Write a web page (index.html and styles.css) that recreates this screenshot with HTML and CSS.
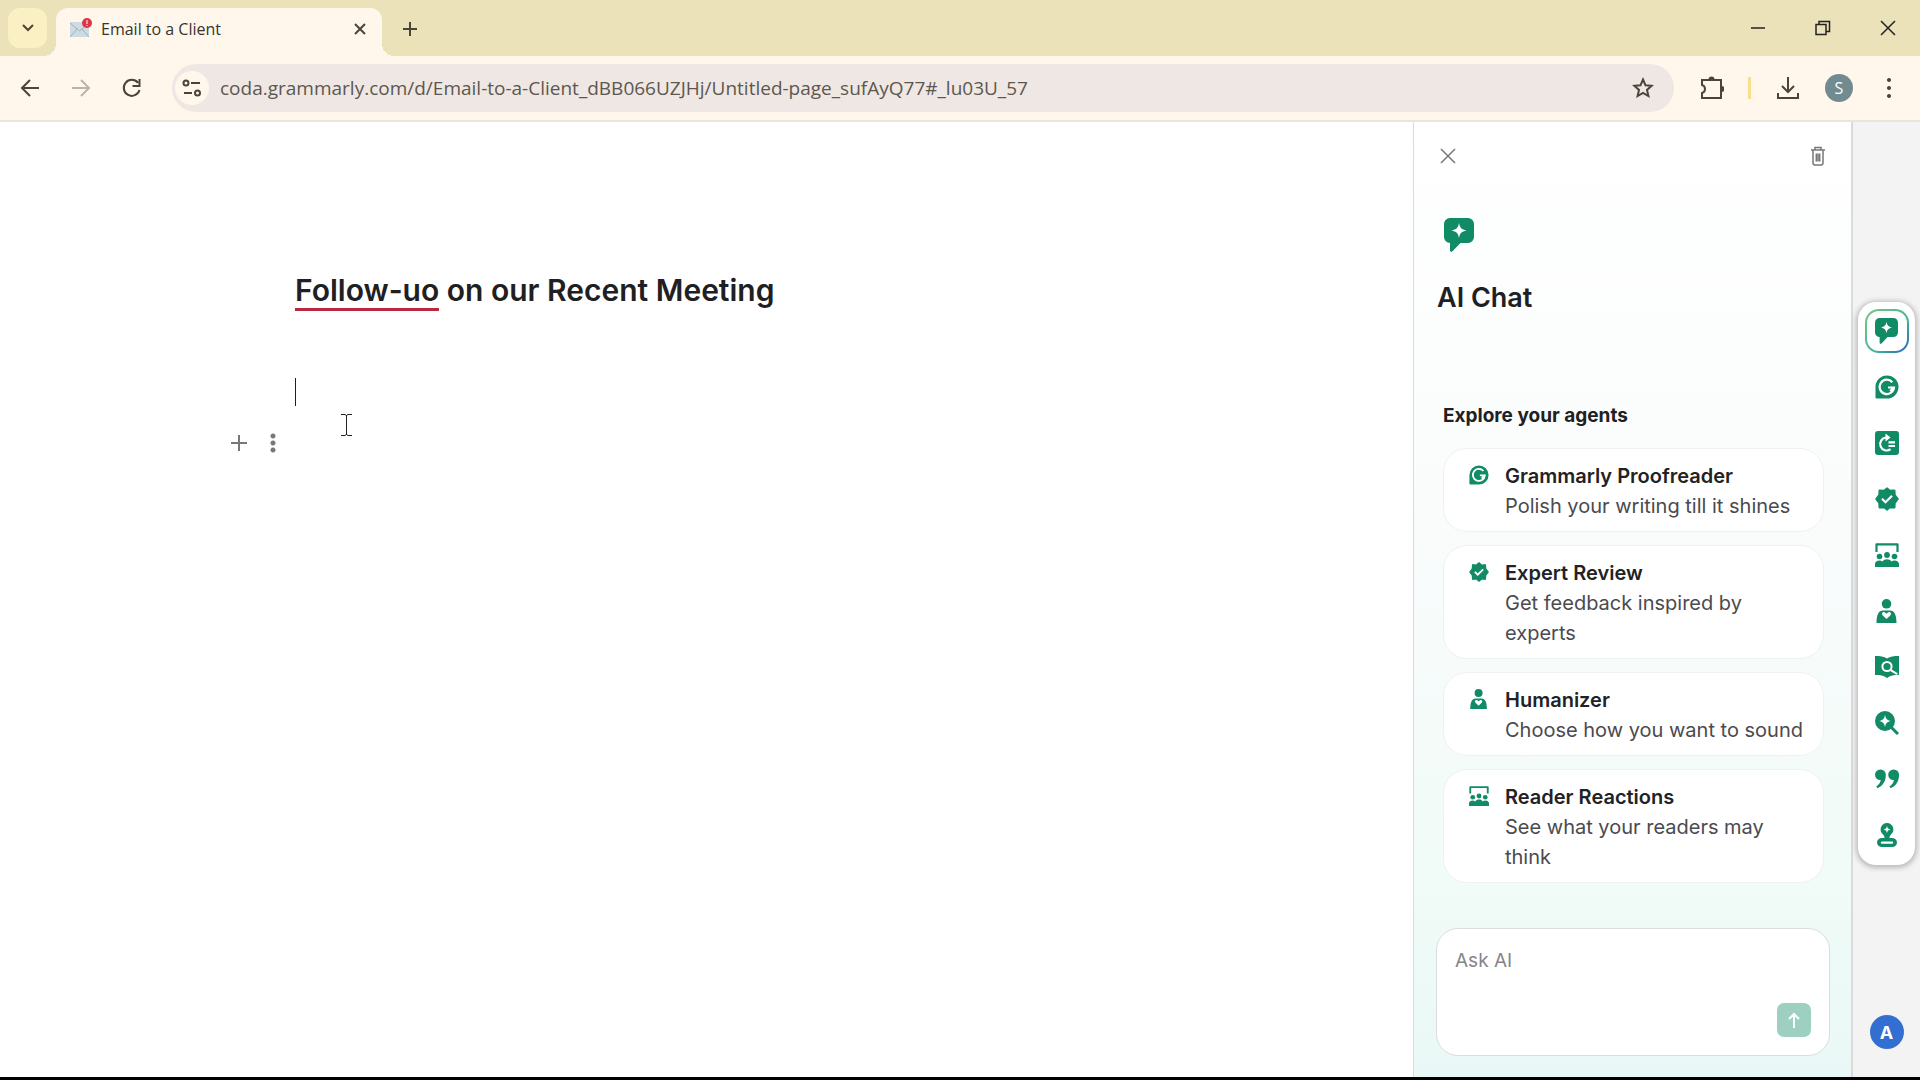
FILE: index.html
```html
<!DOCTYPE html>
<html lang="en">
<head>
  <meta charset="UTF-8" />
  <meta name="viewport" content="width=device-width, initial-scale=1.0"/>
  <title>Email to a Client</title>
  <link rel="stylesheet" href="styles.css">
</head>

<body>
  <!-- shared icon shapes -->
  <svg class="sprite" aria-hidden="true">
    <symbol id="i-chat" viewBox="0 0 30 34">
      <path fill="currentColor" fill-rule="evenodd" d="M6 0h18a6 6 0 0 1 6 6v13a6 6 0 0 1-6 6h-7.500l-8 8.300c-1 1-2.500.5-2.500-1V25a6 6 0 0 1-6-6V6a6 6 0 0 1 6-6zM15 5c1 5 2.500 6.500 7.500 7.500-5 1-6.500 2.500-7.500 7.500-1-5-2.500-6.500-7.500-7.500C12.500 11.500 14 10 15 5z"/>
    </symbol>
    <symbol id="i-proof" viewBox="0 0 24 24">
      <path fill="currentColor" d="M12 0.500A11.500 11.500 0 1 1 12 23.500H1.500a1 1 0 0 1-1-1V12A11.500 11.500 0 0 1 12 .5z"/>
      <path fill="none" stroke="#fff" stroke-width="2.200" d="M17.300 7.200A7.200 7.200 0 1 0 19 12.500h-6M15.200 16.200l3.300-3.700" />
    </symbol>
    <symbol id="i-rewrite" viewBox="0 0 24 24">
      <rect width="24" height="24" rx="3" fill="currentColor"/>
      <path fill="none" stroke="#fff" stroke-width="2.200" d="M15.500 18.200A6.500 6.500 0 1 1 11 6.500h1.500M13.500 11.300H20M13.500 15H20"/>
      <path fill="#fff" d="M10.500 2.500l5 4-5 4z"/>
    </symbol>
    <symbol id="i-badge" viewBox="0 0 24 24">
      <path fill="currentColor" stroke="currentColor" stroke-width="1.500" stroke-linejoin="round" d="M12 1l3 2.600 4.700-.3.300 4.700L23 12l-3 4-.3 4.700-4.700-.3L12 23l-3-2.600-4.700.3L4 16l-3-4 3-4 .3-4.700 4.700.3z"/>
      <path fill="none" stroke="#fff" stroke-width="2.200" d="M7 11.800l3.500 3.500 6.500-6.500"/>
    </symbol>
    <symbol id="i-readers" viewBox="0 0 24 24">
      <path fill="none" stroke="currentColor" stroke-width="2.200" stroke-linejoin="round" d="M1.500 9V1.300h21V9"/>
      <circle cx="4.500" cy="13.500" r="2.800" fill="currentColor"/>
      <circle cx="12" cy="12" r="2.900" fill="currentColor"/>
      <circle cx="19.500" cy="13.500" r="2.800" fill="currentColor"/>
      <path fill="currentColor" d="M0 24v-3c0-3.500 5-4.500 7.500-2.500 2-3 7-3 9 0C19 16.500 24 17.500 24 21v3z"/>
    </symbol>
    <symbol id="i-human" viewBox="0 0 24 24">
      <circle cx="11.500" cy="4.800" r="4.800" fill="currentColor"/>
      <path fill="currentColor" fill-rule="evenodd" d="M1.500 24c0-8 2-12.500 6.500-12.500h7c4.500 0 6.500 4.500 6.500 12.500zM11.500 20l4-3.800c1.500-1.800-1-4.200-2.800-2.500l-1.200 1-1.200-1c-1.800-1.700-4.300.7-2.800 2.500z"/>
    </symbol>
    <symbol id="i-book" viewBox="0 0 24 24">
      <path fill="currentColor" d="M0 1c5 0 9 .5 12 2.500C15 1.500 19 1 24 1v19c-5 0-9 .5-12 3-3-2.500-7-3-12-3z"/>
      <circle cx="12" cy="11.500" r="4.600" fill="none" stroke="#fff" stroke-width="2"/>
      <path stroke="#fff" stroke-width="2" d="M15.300 14.800l7 4.400"/>
    </symbol>
    <symbol id="i-search" viewBox="0 0 24 24">
      <path fill="currentColor" fill-rule="evenodd" d="M10 0a10 10 0 1 1 0 20 10 10 0 0 1 0-20zM10 4c1 4.500 2 5 6 6-4 1-5 1.500-6 6-1-4.500-2-5-6-6 4-1 5-1.500 6-6z"/>
      <path stroke="currentColor" stroke-width="3" d="M16 16l7 7"/>
    </symbol>
    <symbol id="i-quote" viewBox="0 0 24 24">
      <path fill="currentColor" d="M5.300 2.500a5.300 5.300 0 0 1 5.500 5.700c0 6.500-3.500 10.800-8.300 13l-1.200-1.700c2.700-1.800 4.200-4 4.400-6.500A5.200 5.200 0 0 1 0 7.800a5.300 5.300 0 0 1 5.300-5.300z"/>
      <path fill="currentColor" d="M18.500 2.500A5.300 5.300 0 0 1 24 8.200c0 6.500-3.500 10.800-8.300 13l-1.200-1.700c2.700-1.800 4.200-4 4.400-6.500a5.200 5.200 0 0 1-5.700-5.200 5.300 5.300 0 0 1 5.300-5.300z"/>
    </symbol>
    <symbol id="i-stamp" viewBox="0 0 24 24">
      <path fill="currentColor" fill-rule="evenodd" d="M12 0a6.500 6.500 0 0 1 4 11.500c-1 .8-1.500 2-1.500 3.500h2.500a5 4.500 0 0 1 0 9H7a5 4.500 0 0 1 0-9h2.500c0-1.500-.5-2.700-1.500-3.500A6.500 6.500 0 0 1 12 0zM12 3c-.6 2.500-1.300 3-3.500 3.500 2.200.5 2.900 1.200 3.500 3.500.6-2.300 1.300-3 3.500-3.500C13.300 6 12.600 5.500 12 3zM7 18.400a1.200 1.200 0 0 0 0 2.400h10a1.200 1.200 0 0 0 0-2.400z"/>
    </symbol>
  </svg>

  <header class="browser">
    <div class="tab-strip">
      <button class="tab-search" aria-label="Search tabs">
        <svg width="14" height="10" viewBox="0 0 14 10"><path d="M2 2l5 5 5-5"/></svg>
      </button>
      <div class="tab">
        <svg class="favicon" width="22" height="20" viewBox="0 0 22 20">
          <rect x="0" y="4" width="19" height="15" rx="1" fill="#cfdbe0"/>
          <path d="M0 5l9.500 8L19 5M0 19l7-8M19 19l-7-8" fill="none" stroke="#9fb2bb"/>
          <circle cx="17" cy="5" r="5" fill="#dc3748"/>
          <path d="M17 2v4M17 7v1" stroke="#fff"/>
        </svg>
        <span class="tab-title">Email to a Client</span>
        <button class="tab-close" aria-label="Close tab">
          <svg width="12" height="12" viewBox="0 0 12 12"><path d="M1 1l10 10M11 1L1 11"/></svg>
        </button>
      </div>
      <button class="tab-new" aria-label="New tab">
        <svg width="16" height="16" viewBox="0 0 16 16"><path d="M8 1v14M1 8h14"/></svg>
      </button>
      <div class="window-buttons">
        <button aria-label="Minimize"><svg width="16" height="16" viewBox="0 0 16 16"><path d="M1 8h14"/></svg></button>
        <button aria-label="Restore"><svg width="16" height="16" viewBox="0 0 16 16"><path d="M1 4.500h10v10H1zM4 4V1.500h10.500v10H11"/></svg></button>
        <button aria-label="Close"><svg width="16" height="16" viewBox="0 0 16 16"><path d="M1 1l14 14M15 1L1 15"/></svg></button>
      </div>
    </div>

    <div class="toolbar">
      <div class="nav-buttons">
        <button aria-label="Back"><svg width="20" height="20" viewBox="0 0 20 20"><path d="M19 10H3M10 2l-8 8 8 8"/></svg></button>
        <button class="disabled" aria-label="Forward"><svg width="20" height="20" viewBox="0 0 20 20"><path d="M1 10h16M10 2l8 8-8 8"/></svg></button>
        <button aria-label="Reload"><svg width="20" height="20" viewBox="0 0 20 20"><path d="M17.500 12A8 8 0 1 1 16 4.800M17.500 1v7h-7"/></svg></button>
      </div>
      <div class="omnibox">
        <button class="site-info" aria-label="View site information">
          <svg width="20" height="18" viewBox="0 0 20 18"><circle cx="4" cy="4" r="2.500"/><path d="M9 4h9M2 14h8"/><circle cx="15.500" cy="14" r="2.500"/></svg>
        </button>
        <input class="url" type="text" aria-label="Address" value="coda.grammarly.com/d/Email-to-a-Client_dBB066UZJHj/Untitled-page_sufAyQ77#_lu03U_57" />
        <button class="bookmark" aria-label="Bookmark this tab">
          <svg width="22" height="22" viewBox="0 0 22 22"><path d="M11 2.500l2.500 5.800 6.200.5-4.700 4.100 1.400 6.100-5.400-3.200L5.600 19 7 12.900 2.300 8.800l6.200-.5z"/></svg>
        </button>
      </div>
      <div class="toolbar-actions">
        <button aria-label="Extensions">
          <svg width="24" height="24" viewBox="0 0 24 24"><path d="M2 4h19v18H2v-5c4-1 4-7 0-8z"/><path class="solid" d="M8.500 3.500a3 3 0 0 1 6 0zM21.500 10a3 3 0 0 1 0 6z"/></svg>
        </button>
        <span class="divider"></span>
        <button aria-label="Downloads">
          <svg width="24" height="24" viewBox="0 0 24 24"><path d="M12 1v14M6 10l6 6 6-6M2 17v5h20v-5"/></svg>
        </button>
        <button class="profile" aria-label="Profile">S</button>
        <button aria-label="Menu">
          <svg width="6" height="22" viewBox="0 0 6 22"><path class="solid" d="M3 1a2 2 0 1 0 .01 0zM3 9a2 2 0 1 0 .01 0zM3 17a2 2 0 1 0 .01 0z"/></svg>
        </button>
      </div>
    </div>
  </header>

  <div class="page">
    <main class="editor">
      <h1><span class="misspelled">Follow-uo</span> on our Recent Meeting</h1>
      <div class="caret-line"><span class="caret"></span>
        <svg class="pointer" width="11" height="24" viewBox="0 0 11 24"><path d="M0 1.500h4l1.500 1 1.500-1h4M5.500 2v20M0 22.500h4l1.500-1 1.500 1h4"/></svg>
      </div>
      <div class="block-tools">
        <button aria-label="Insert"><svg width="18" height="18" viewBox="0 0 18 18"><path d="M9 1v16M1 9h16"/></svg></button>
        <button aria-label="Block options"><svg width="6" height="20" viewBox="0 0 6 20"><path class="solid" d="M3 .5a2.500 2.500 0 1 0 .01 0zM3 7.500a2.500 2.500 0 1 0 .01 0zM3 14.500a2.500 2.500 0 1 0 .01 0z"/></svg></button>
      </div>
    </main>

    <aside class="panel">
      <div class="panel-top">
        <button aria-label="Close panel"><svg width="16" height="16" viewBox="0 0 16 16"><path d="M1 1l14 14M15 1L1 15"/></svg></button>
        <button aria-label="Clear chat"><svg width="14" height="20" viewBox="0 0 14 20"><path d="M0 4h14M4 4V1.500h6V4M2 4v12.500c0 1.500.5 2.500 2 2.500h6c1.500 0 2-1 2-2.500V4M5.300 7.500v8M7 7.500v8M8.700 7.500v8"/></svg></button>
      </div>
      <svg class="panel-logo" width="30" height="34"><use href="#i-chat"/></svg>
      <h2>AI Chat</h2>
      <h3>Explore your agents</h3>
      <div class="agents">
        <button class="agent">
          <svg width="20" height="20"><use href="#i-proof"/></svg>
          <span><b>Grammarly Proofreader</b>Polish your writing till it shines</span>
        </button>
        <button class="agent">
          <svg width="20" height="20"><use href="#i-badge"/></svg>
          <span><b>Expert Review</b>Get feedback inspired by experts</span>
        </button>
        <button class="agent">
          <svg width="20" height="20"><use href="#i-human"/></svg>
          <span><b>Humanizer</b>Choose how you want to sound</span>
        </button>
        <button class="agent">
          <svg width="20" height="20"><use href="#i-readers"/></svg>
          <span><b>Reader Reactions</b>See what your readers may think</span>
        </button>
      </div>
      <form class="ask">
        <textarea aria-label="Ask AI" placeholder="Ask AI"></textarea>
        <button type="button" aria-label="Send"><svg width="16" height="18" viewBox="0 0 16 18"><path d="M8 17V3M3 8l5-5 5 5"/></svg></button>
      </form>
    </aside>

    <nav class="rail">
      <div class="rail-tools">
        <button class="active" aria-label="AI Chat"><svg width="23" height="26"><use href="#i-chat"/></svg></button>
        <button aria-label="Proofreader"><svg width="24" height="24"><use href="#i-proof"/></svg></button>
        <button aria-label="Paraphraser"><svg width="24" height="24"><use href="#i-rewrite"/></svg></button>
        <button aria-label="Expert Review"><svg width="24" height="24"><use href="#i-badge"/></svg></button>
        <button aria-label="Reader Reactions"><svg width="24" height="24"><use href="#i-readers"/></svg></button>
        <button aria-label="Humanizer"><svg width="24" height="24"><use href="#i-human"/></svg></button>
        <button aria-label="Citation Finder"><svg width="24" height="24"><use href="#i-book"/></svg></button>
        <button aria-label="AI Detector"><svg width="24" height="24"><use href="#i-search"/></svg></button>
        <button aria-label="Plagiarism Checker"><svg width="24" height="24"><use href="#i-quote"/></svg></button>
        <button aria-label="Authorship"><svg width="24" height="24"><use href="#i-stamp"/></svg></button>
      </div>
      <button class="account" aria-label="Account">A</button>
    </nav>
  </div>
</body>
</html>
```
FILE: styles.css
```css
* {
  box-sizing: border-box;
}

body {
  margin: 0;
  min-height: 100vh;
  display: flex;
  flex-direction: column;
  font-family: Inter, sans-serif;
  color: #1f2022;
  background: #fff;
  border-bottom: 3px solid #000;
}

button {
  display: flex;
  align-items: center;
  justify-content: center;
  padding: 0;
  border: none;
  background: none;
  color: inherit;
  font: inherit;
  cursor: pointer;
}

button > svg {
  flex: none;
  fill: none;
  stroke: currentColor;
  stroke-width: 2;
}

button > svg .solid {
  fill: currentColor;
  stroke: none;
}

button > svg use {
  stroke: none;
}

.sprite {
  position: absolute;
  width: 0;
  height: 0;
}

/* browser bar */
.browser {
  font-family: "Open Sans", sans-serif;
  color: #4b4438;
}

.tab-strip {
  display: flex;
  height: 56px;
  padding: 8px 0 0 8px;
  background: #ece2b9;
}

.tab-search {
  width: 39px;
  height: 40px;
  margin-right: 9px;
  border-radius: 12px;
  background: #fbf0c3;
}

.tab {
  position: relative;
  display: flex;
  align-items: center;
  width: 326px;
  padding: 0 14px;
  border-radius: 12px 12px 0 0;
  background: #fff7ec;
}

/* curved feet of the open tab */
.tab::before,
.tab::after {
  content: "";
  position: absolute;
  bottom: 0;
  width: 12px;
  height: 12px;
}

.tab::before {
  right: 100%;
  background: radial-gradient(circle at 0 0, transparent 12px, #fff7ec 12px);
}

.tab::after {
  left: 100%;
  background: radial-gradient(circle at 100% 0, transparent 12px, #fff7ec 12px);
}

.favicon {
  margin-right: 9px;
  margin-bottom: 8px;
}

.tab-title {
  flex: 1;
  font-size: 16px;
  line-height: 24px;
  padding-bottom: 6px;
  color: #38342d;
}

.tab-close,
.tab-new {
  width: 16px;
  margin-bottom: 6px;
}

.tab-new {
  margin-left: 20px;
  height: 42px;
}

.window-buttons {
  display: flex;
  margin-left: auto;
  height: 40px;
  color: #222;
}

.window-buttons button {
  width: 65px;
}

.window-buttons svg {
  stroke-width: 1.5;
}

.toolbar {
  display: flex;
  align-items: center;
  height: 66px;
  padding: 0 20px;
  background: #fff7ec;
  border-bottom: 2px solid #e8e6da;
}

.nav-buttons {
  display: flex;
  gap: 31px;
  margin-right: 30px;
}

.nav-buttons .disabled {
  color: #b9b3aa;
}

.omnibox {
  flex: 1;
  display: flex;
  align-items: center;
  height: 48px;
  padding: 0 20px 0 3px;
  border-radius: 24px;
  background: #efe7e3;
}

.site-info {
  width: 34px;
  height: 34px;
  margin-right: 11px;
  border-radius: 50%;
  background: #fff7ec;
}

.url {
  flex: 1;
  min-width: 0;
  padding: 0;
  border: none;
  outline: none;
  background: none;
  font-family: "Open Sans", sans-serif;
  font-size: 19px;
  line-height: 28px;
  color: #5d5751;
}

.toolbar-actions {
  display: flex;
  align-items: center;
  margin-left: 26px;
}

.divider {
  width: 3px;
  height: 22px;
  margin: 0 25px 0 24px;
  background: #f8df8e;
}

.profile {
  width: 28px;
  height: 28px;
  margin: 0 33px 0 25px;
  border-radius: 50%;
  background: #728b90;
  color: #fff;
  font-size: 16px;
}

.toolbar-actions button:last-child {
  margin-right: 8px;
}

/* page */
.page {
  flex: 1;
  display: flex;
}

.editor {
  flex: 1;
  padding: 148px 64px 0 295px;
}

h1 {
  margin: 0;
  font-size: 30px;
  line-height: 40px;
  font-weight: 600;
}

.misspelled {
  border-bottom: 3px solid #b9283f;
}

.caret-line {
  position: relative;
  margin-top: 68px;
  height: 28px;
}

.caret {
  display: block;
  width: 1px;
  height: 28px;
  background: #1f2022;
}

.pointer {
  position: absolute;
  left: 46px;
  top: 35px;
  fill: none;
  stroke: #222;
}

.block-tools {
  display: flex;
  gap: 22px;
  margin: 27px 0 0 -65px;
  color: #77777b;
}

/* AI chat panel */
.panel {
  display: flex;
  flex-direction: column;
  width: 440px;
  padding: 24px 21px 21px 22px;
  border: solid #dadcdc;
  border-width: 0 2px 0 1px;
  background: linear-gradient(#fff, #fafcfc 40%, #f1fbf8 80%, #e9f8f6);
}

.panel-top {
  display: flex;
  justify-content: space-between;
  padding: 0 5px 0 4px;
  color: #77777a;
}

.panel-top svg {
  stroke-width: 1.5;
}

.panel-logo {
  margin: 52px 0 0 8px;
  color: #118a66;
}

h2 {
  margin: 28px 0 0 1px;
  font-size: 27px;
  line-height: 36px;
  font-weight: 600;
}

h3 {
  margin: 86px 0 0 7px;
  font-size: 19px;
  line-height: 28px;
  font-weight: 700;
}

.agents {
  display: flex;
  flex-direction: column;
  gap: 13px;
  margin: 18px 6px 0 7px;
}

.agent {
  align-items: flex-start;
  justify-content: flex-start;
  gap: 16px;
  padding: 12px 14px 10px 25px;
  border: 1px solid #eff2f2;
  border-radius: 24px;
  background: #fff;
  text-align: left;
  font-size: 20px;
  line-height: 30px;
  color: #4a4a4f;
}

.agent svg {
  margin-top: 4px;
  color: #118a66;
}

.agent b {
  display: block;
  font-weight: 600;
  color: #222225;
}

.ask {
  display: flex;
  flex-direction: column;
  height: 128px;
  margin-top: auto;
  padding: 18px;
  border: 1px solid #d9dedd;
  border-radius: 22px;
  background: #fff;
}

.ask textarea {
  flex: 1;
  padding: 0;
  border: none;
  outline: none;
  resize: none;
  background: none;
  font-family: Inter, sans-serif;
  font-size: 19px;
  line-height: 28px;
}

.ask textarea::placeholder {
  color: #85858a;
}

.ask button {
  align-self: flex-end;
  width: 34px;
  height: 34px;
  border-radius: 7px;
  background: #9dd0c0;
  color: #fff;
}

/* right rail */
.rail {
  display: flex;
  flex-direction: column;
  align-items: center;
  width: 67px;
  padding: 180px 0 28px;
  background: #f3f3f3;
}

.rail-tools {
  display: flex;
  flex-direction: column;
  align-items: center;
  gap: 12px;
  width: 57px;
  padding: 7px 0 8px;
  border-radius: 18px;
  background: #fff;
  box-shadow: 0 1px 5px 2px #bbb;
  color: #118a66;
}

.rail-tools button {
  width: 44px;
  height: 44px;
}

.rail-tools .active {
  border: 2px solid transparent;
  border-radius: 14px;
  background:
    linear-gradient(#fff, #fff) padding-box,
    linear-gradient(135deg, #7bc67e, #3fb79a 60%, #2f5fc0) border-box;
}

.account {
  width: 34px;
  height: 34px;
  margin-top: auto;
  border-radius: 50%;
  background: #336fd0;
  color: #fff;
  font-size: 18px;
  font-weight: 700;
}
```
